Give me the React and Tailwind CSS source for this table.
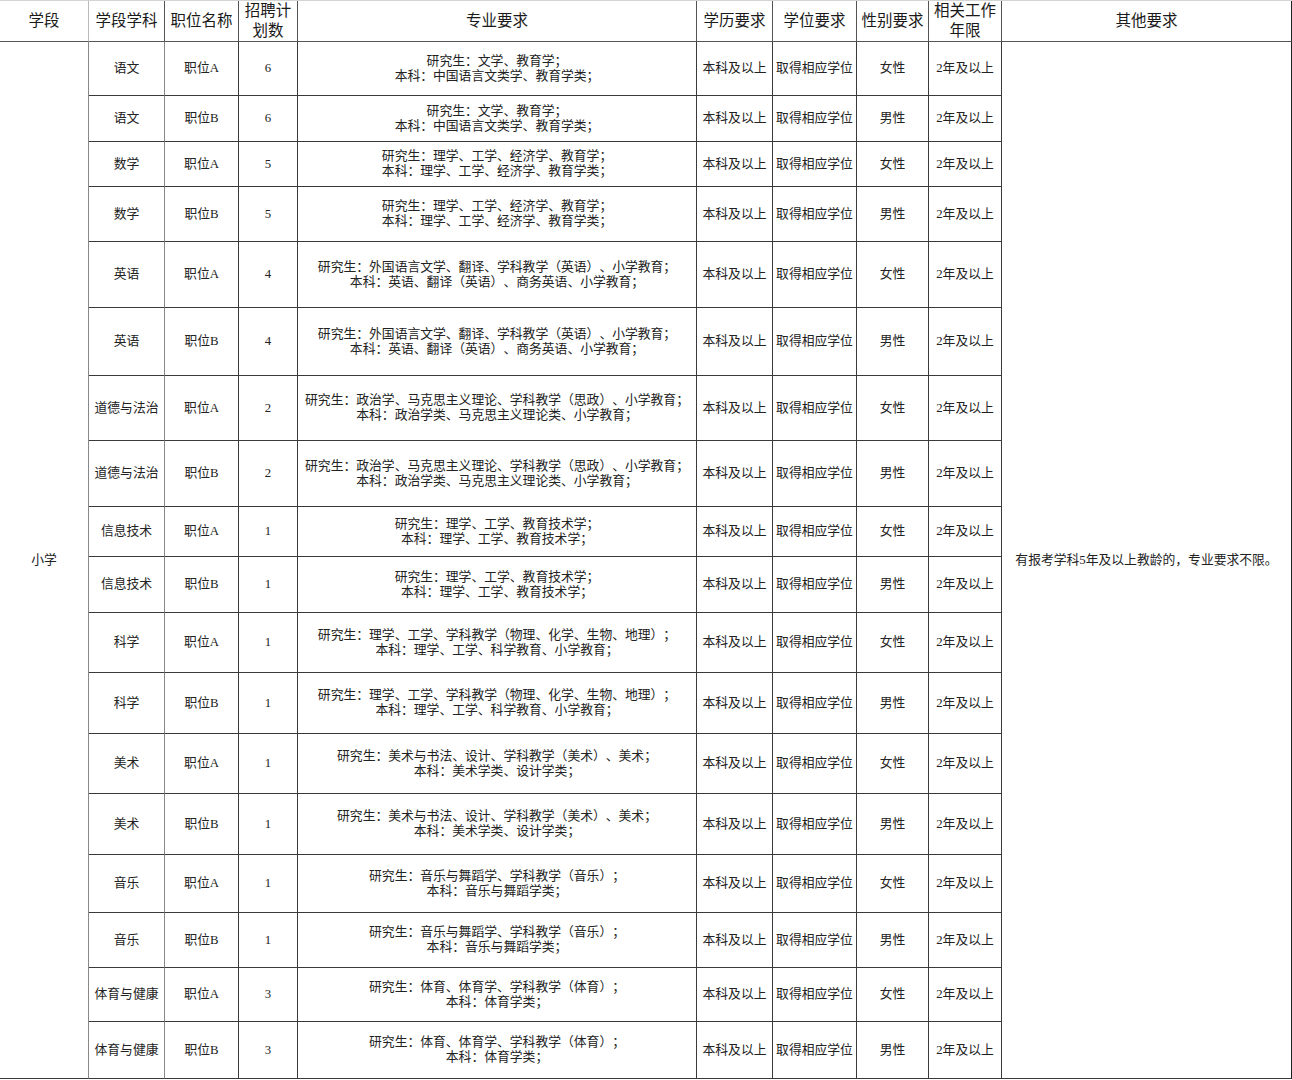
import React from "react";

const font = {
  fontFamily: '"Liberation Serif", "Noto Sans CJK SC", serif',
};

const rows = [
  ["语文", "职位A", "6", "研究生：文学、教育学；", "本科：中国语言文类学、教育学类；", "女性"],
  ["语文", "职位B", "6", "研究生：文学、教育学；", "本科：中国语言文类学、教育学类；", "男性"],
  ["数学", "职位A", "5", "研究生：理学、工学、经济学、教育学；", "本科：理学、工学、经济学、教育学类；", "女性"],
  ["数学", "职位B", "5", "研究生：理学、工学、经济学、教育学；", "本科：理学、工学、经济学、教育学类；", "男性"],
  ["英语", "职位A", "4", "研究生：外国语言文学、翻译、学科教学（英语）、小学教育；", "本科：英语、翻译（英语）、商务英语、小学教育；", "女性"],
  ["英语", "职位B", "4", "研究生：外国语言文学、翻译、学科教学（英语）、小学教育；", "本科：英语、翻译（英语）、商务英语、小学教育；", "男性"],
  ["道德与法治", "职位A", "2", "研究生：政治学、马克思主义理论、学科教学（思政）、小学教育；", "本科：政治学类、马克思主义理论类、小学教育；", "女性"],
  ["道德与法治", "职位B", "2", "研究生：政治学、马克思主义理论、学科教学（思政）、小学教育；", "本科：政治学类、马克思主义理论类、小学教育；", "男性"],
  ["信息技术", "职位A", "1", "研究生：理学、工学、教育技术学；", "本科：理学、工学、教育技术学；", "女性"],
  ["信息技术", "职位B", "1", "研究生：理学、工学、教育技术学；", "本科：理学、工学、教育技术学；", "男性"],
  ["科学", "职位A", "1", "研究生：理学、工学、学科教学（物理、化学、生物、地理）；", "本科：理学、工学、科学教育、小学教育；", "女性"],
  ["科学", "职位B", "1", "研究生：理学、工学、学科教学（物理、化学、生物、地理）；", "本科：理学、工学、科学教育、小学教育；", "男性"],
  ["美术", "职位A", "1", "研究生：美术与书法、设计、学科教学（美术）、美术；", "本科：美术学类、设计学类；", "女性"],
  ["美术", "职位B", "1", "研究生：美术与书法、设计、学科教学（美术）、美术；", "本科：美术学类、设计学类；", "男性"],
  ["音乐", "职位A", "1", "研究生：音乐与舞蹈学、学科教学（音乐）；", "本科：音乐与舞蹈学类；", "女性"],
  ["音乐", "职位B", "1", "研究生：音乐与舞蹈学、学科教学（音乐）；", "本科：音乐与舞蹈学类；", "男性"],
  ["体育与健康", "职位A", "3", "研究生：体育、体育学、学科教学（体育）；", "本科：体育学类；", "女性"],
  ["体育与健康", "职位B", "3", "研究生：体育、体育学、学科教学（体育）；", "本科：体育学类；", "男性"],
];

const cell =
  "flex items-center justify-center text-center border-r border-b border-[#3a3a3a] text-[12.8px] leading-[15px] text-[#222] whitespace-nowrap";
const head =
  "flex items-center justify-center text-center border-r border-b border-[#555] text-[15.5px] leading-[20px] text-[#1a1a1a] whitespace-nowrap";

export default function App() {
  return (
    <div
      className="w-[1292px] h-[1080px] bg-white overflow-hidden [text-spacing-trim:space-all]"
      style={font}
    >
      <div className="grid grid-cols-[89px_76px_74px_59px_399px_76px_84px_72px_73px_290px] grid-rows-[41px_54px_46px_45px_55px_66px_68px_65px_66px_50px_56px_60px_61px_60px_61px_58px_55px_54px_57px] border-t border-[#d4d4d4]">
        <div className={head + " border-r-[#bbb]"}>学段</div>
        <div className={head}>学段学科</div>
        <div className={head}>职位名称</div>
        <div className={head}>
          招聘计
          <br />
          划数
        </div>
        <div className={head}>专业要求</div>
        <div className={head}>学历要求</div>
        <div className={head}>学位要求</div>
        <div className={head}>性别要求</div>
        <div className={head}>
          相关工作
          <br />
          年限
        </div>
        <div className={head + " border-r-[#222]"}>其他要求</div>

        <div className={cell + " col-start-1 row-start-2 row-span-18 border-r-[#888]"}>小学</div>
        <div className={cell + " col-start-10 row-start-2 row-span-18 border-r-[#222]"}>
          有报考学科5年及以上教龄的，专业要求不限。
        </div>

        {rows.map((r, i) => (
          <React.Fragment key={i}>
            <div className={cell + " border-r-[#888]"}>{r[0]}</div>
            <div className={cell}>{r[1]}</div>
            <div className={cell}>{r[2]}</div>
            <div className={cell + " flex-col"}>
              <span>{r[3]}</span>
              <span>{r[4]}</span>
            </div>
            <div className={cell}>本科及以上</div>
            <div className={cell}>取得相应学位</div>
            <div className={cell}>{r[5]}</div>
            <div className={cell}>2年及以上</div>
          </React.Fragment>
        ))}
      </div>
    </div>
  );
}
